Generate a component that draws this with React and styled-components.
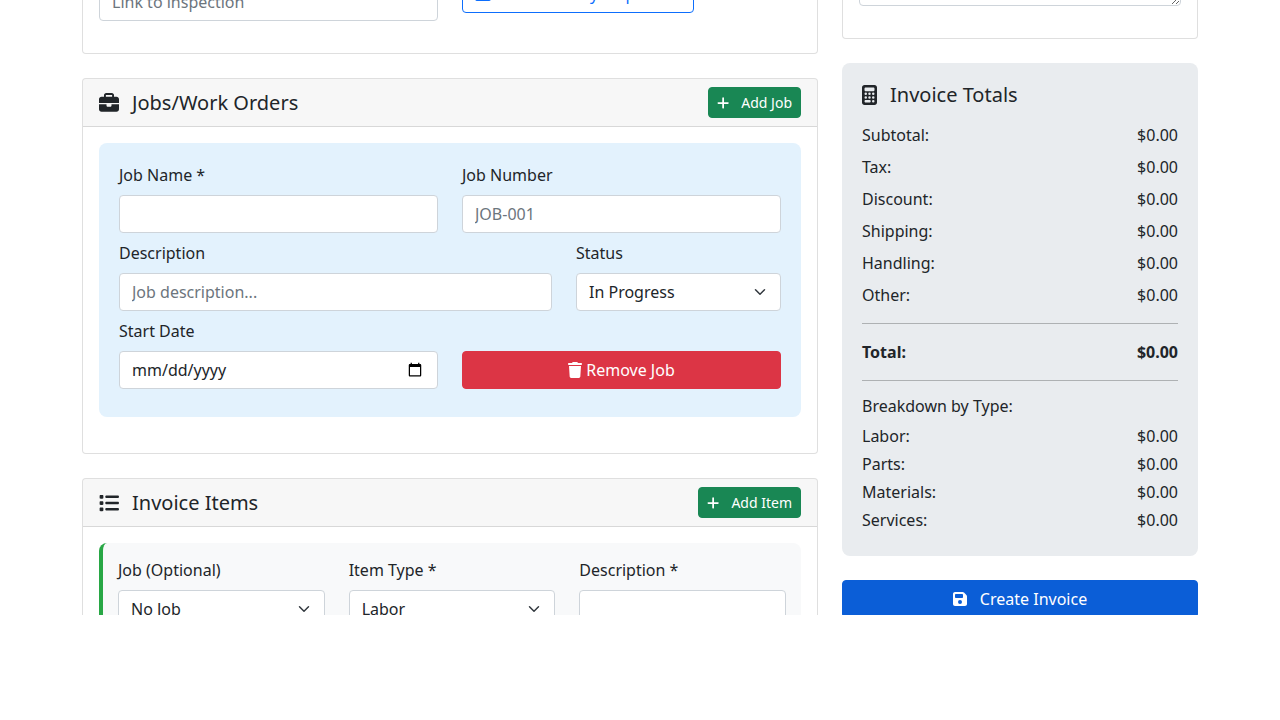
import React from 'react'
import styled, { createGlobalStyle } from 'styled-components'
import { FaBriefcase, FaCalculator, FaList, FaPlus, FaTrash, FaFloppyDisk, FaTable } from 'react-icons/fa6'

const GlobalStyle = createGlobalStyle`
  * { box-sizing: border-box; }
  body {
    margin: 0;
    background: #fff;
    color: #212529;
    font-family: "Noto Sans", sans-serif;
    font-size: 16px;
    line-height: 1.5;
  }
  ::-webkit-datetime-edit,
  ::-webkit-datetime-edit-fields-wrapper,
  ::-webkit-datetime-edit-text,
  ::-webkit-datetime-edit-month-field,
  ::-webkit-datetime-edit-day-field,
  ::-webkit-datetime-edit-year-field {
    padding: 0;
  }
`

const chevron = "url(\"data:image/svg+xml,%3csvg xmlns='http://www.w3.org/2000/svg' viewBox='0 0 16 16'%3e%3cpath fill='none' stroke='%23343a40' stroke-linecap='round' stroke-linejoin='round' stroke-width='2' d='m2 5 6 6 6-6'/%3e%3c/svg%3e\")"

// the screenshot is a scrolled page, cut off at the bottom
const Viewport = styled.div`
  height: 615px;
  overflow: hidden;
`
const Container = styled.div`
  width: 1116px;
  margin: -144px auto 0;
  display: grid;
  grid-template-columns: 736px 356px;
  gap: 24px;
  align-items: start;
`
const Column = styled.div`
  display: flex;
  flex-direction: column;
  gap: 24px;
`
const Card = styled.section`
  background: #fff;
  border: 1px solid rgba(0, 0, 0, 0.125);
  border-radius: 4px;
`
const CardHeader = styled.header`
  display: flex;
  align-items: center;
  justify-content: space-between;
  height: 48px;
  padding: 0 16px;
  background: rgba(0, 0, 0, 0.03);
  border-bottom: 1px solid rgba(0, 0, 0, 0.125);
  border-radius: 3px 3px 0 0;
`
const CardTitle = styled.h5`
  display: flex;
  align-items: center;
  gap: 13px;
  margin: 0;
  font-size: 20px;
  font-weight: 400;
  line-height: 24px;
  svg { flex: none; width: 20px; height: 20px; }
`
const CardBody = styled.div`
  padding: 16px;
`
const Row = styled.div`
  display: grid;
  grid-template-columns: ${p => p.$cols || '1fr 1fr'};
  column-gap: 24px;
  margin-bottom: ${p => p.$mb || 8}px;
`
const Field = styled.div`
  min-width: 0;
  padding-top: ${p => p.$offset || 0}px;
`
const Label = styled.label`
  display: block;
  margin-bottom: 8px;
`
const Input = styled.input`
  display: block;
  width: 100%;
  height: 38px;
  padding: 6px 12px;
  background: #fff;
  color: #212529;
  font: inherit;
  border: 1px solid #ced4da;
  border-radius: 4px;
  &::placeholder { color: #6c757d; opacity: 1; }
`
const Select = styled.select`
  display: block;
  width: 100%;
  height: 38px;
  padding: 6px 36px 6px 12px;
  color: #212529;
  font: inherit;
  appearance: none;
  background: #fff ${chevron} no-repeat right 12px center / 16px 12px;
  border: 1px solid #ced4da;
  border-radius: 4px;
`
const TextArea = styled.textarea`
  display: block;
  width: 100%;
  height: 101px;
  margin-bottom: 16px;
  padding: 6px 12px;
  font: inherit;
  border: 1px solid #ced4da;
  border-radius: 4px;
`
const Button = styled.button`
  display: inline-flex;
  align-items: center;
  justify-content: center;
  gap: ${p => p.$gap ?? 8}px;
  height: 38px;
  padding: 0 12px;
  font: inherit;
  color: #fff;
  background: ${p => p.$bg};
  border: 1px solid ${p => p.$bg};
  border-radius: 4px;
  cursor: pointer;
  white-space: nowrap;
  svg { flex: none; }
`
const OutlineButton = styled(Button)`
  color: #0d6efd;
  background: transparent;
  border-color: #0d6efd;
`
const WideButton = styled(Button)`
  width: 100%;
  padding: 0 13px 0 12px;
`
const SmallButton = styled(Button)`
  height: 31px;
  padding: 0 8px;
  gap: 11.75px;
  font-size: 14px;
  svg { width: 12.25px; height: 14px; }
`
const JobBox = styled.div`
  padding: 20px;
  margin-bottom: 20px;
  background: #e3f2fd;
  border-radius: 8px;
`
const ItemBox = styled.div`
  padding: 15px;
  background: #f8f9fa;
  border-left: 4px solid #28a745;
  border-radius: 8px;
`
const ItemRow = styled.div`
  display: grid;
  grid-template-columns: repeat(3, 1fr);
  column-gap: 24px;
`
const Totals = styled.aside`
  padding: 20px;
  background: #e9ecef;
  border-radius: 8px;
`
const TotalsTitle = styled(CardTitle)`
  margin-bottom: 16px;
  svg { width: 15px; }
`
const TotalLine = styled.div`
  display: flex;
  justify-content: space-between;
  margin-bottom: ${p => p.$mb ?? 8}px;
  font-weight: ${p => (p.$bold ? 700 : 400)};
`
const Rule = styled.hr`
  margin: 16px 0 ${p => p.$after ?? 16}px;
  border: 0;
  border-top: 1px solid rgba(0, 0, 0, 0.25);
`
const BreakdownTitle = styled.div`
  margin-bottom: 6px;
`

const charges = ['Subtotal', 'Tax', 'Discount', 'Shipping', 'Handling', 'Other']
const breakdown = ['Labor', 'Parts', 'Materials', 'Services']

export default function App() {
  return (
    <Viewport>
      <GlobalStyle />
      <Container>
        <Column>
          <Card>
            <CardBody>
              <Row>
                <Field>
                  <Label>Customer</Label>
                  <Input />
                </Field>
                <Field>
                  <Label>Invoice Date</Label>
                  <Input />
                </Field>
              </Row>
              <Row $mb={16}>
                <Field>
                  <Label>Inspection</Label>
                  <Input placeholder="Link to inspection" />
                </Field>
                <Field $offset={24}>
                  <OutlineButton $bg="#0d6efd" $gap={5}>
                    <FaTable />
                    Load Work by Inspection
                  </OutlineButton>
                </Field>
              </Row>
            </CardBody>
          </Card>

          <Card>
            <CardHeader>
              <CardTitle><FaBriefcase />Jobs/Work Orders</CardTitle>
              <SmallButton $bg="#198754"><FaPlus />Add Job</SmallButton>
            </CardHeader>
            <CardBody>
              <JobBox>
                <Row>
                  <Field>
                    <Label>Job Name *</Label>
                    <Input />
                  </Field>
                  <Field>
                    <Label>Job Number</Label>
                    <Input placeholder="JOB-001" />
                  </Field>
                </Row>
                <Row $cols="433px 205px">
                  <Field>
                    <Label>Description</Label>
                    <Input placeholder="Job description..." />
                  </Field>
                  <Field>
                    <Label>Status</Label>
                    <Select defaultValue="In Progress">
                      <option>Pending</option>
                      <option>In Progress</option>
                      <option>Completed</option>
                    </Select>
                  </Field>
                </Row>
                <Row>
                  <Field>
                    <Label>Start Date</Label>
                    <Input type="date" />
                  </Field>
                  <Field $offset={32}>
                    <WideButton $bg="#dc3545" $gap={3}>
                      <FaTrash />Remove Job
                    </WideButton>
                  </Field>
                </Row>
              </JobBox>
            </CardBody>
          </Card>

          <Card>
            <CardHeader>
              <CardTitle><FaList />Invoice Items</CardTitle>
              <SmallButton $bg="#198754"><FaPlus />Add Item</SmallButton>
            </CardHeader>
            <CardBody>
              <ItemBox>
                <ItemRow>
                  <Field>
                    <Label>Job (Optional)</Label>
                    <Select><option>No Job</option></Select>
                  </Field>
                  <Field>
                    <Label>Item Type *</Label>
                    <Select><option>Labor</option></Select>
                  </Field>
                  <Field>
                    <Label>Description *</Label>
                    <Input />
                  </Field>
                </ItemRow>
              </ItemBox>
            </CardBody>
          </Card>
        </Column>

        <Column>
          <Card>
            <CardBody>
              <Label>Notes</Label>
              <TextArea />
            </CardBody>
          </Card>

          <Totals>
            <TotalsTitle><FaCalculator />Invoice Totals</TotalsTitle>
            {charges.map(name => (
              <TotalLine key={name}><span>{name}:</span><span>$0.00</span></TotalLine>
            ))}
            <Rule />
            <TotalLine $bold $mb={0}><span>Total:</span><span>$0.00</span></TotalLine>
            <Rule $after={13} />
            <BreakdownTitle>Breakdown by Type:</BreakdownTitle>
            {breakdown.map(name => (
              <TotalLine key={name} $mb={4}><span>{name}:</span><span>$0.00</span></TotalLine>
            ))}
          </Totals>

          <WideButton $bg="#0b5ed7" $gap={12}><FaFloppyDisk />Create Invoice</WideButton>
        </Column>
      </Container>
    </Viewport>
  )
}
